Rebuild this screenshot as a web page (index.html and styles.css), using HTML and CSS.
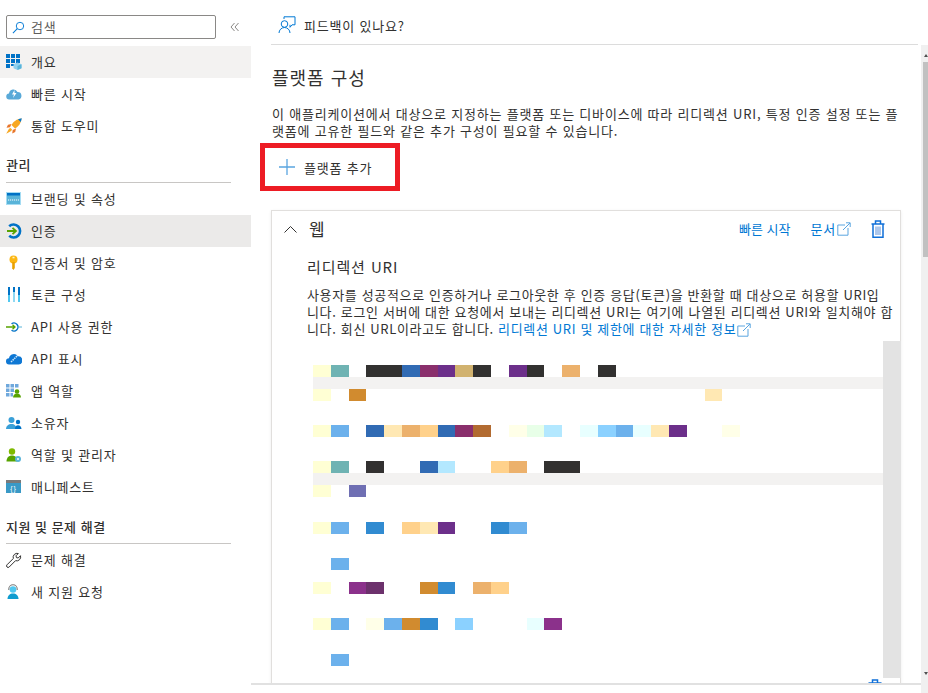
FILE: index.html
```html
<!DOCTYPE html>
<html lang="ko">
<head>
<meta charset="utf-8">
<title>플랫폼 구성</title>
<link rel="stylesheet" href="styles.css">
</head>
<body>
<div class="app">
  <aside class="sidebar">
    <div class="search-row">
      <div class="search">
        <svg class="search-icon" viewBox="0 0 14 14"><circle cx="8.6" cy="5.4" r="4" fill="none" stroke="#0078d4"/><path d="M5.7 8.3 1 13" stroke="#0078d4" stroke-width="1.1"/></svg>
        <span>검색</span>
      </div>
      <svg class="collapse" viewBox="0 0 10 10"><path d="M4.500 1 1 5l3.500 4M8.500 1 5 5l3.500 4" fill="none" stroke="#8a8886"/></svg>
    </div>
    <a class="nav-item hover"><svg class="nav-icon" viewBox="0 0 16 16"><path fill="#0072c6" d="M0 0h4v4H0zM5 0h4v4H5zM10 0h4v4h-4zM0 5h4v4H0zM5 5h4v4H5zM10 5h4v4h-4zM0 10h4v4H0zM5 10h4v2H5z"/><path fill="#8fd0ef" d="m11.500 8.500 4 1.800v4L11.500 16l-4-1.700v-4z"/><path fill="#59b4d9" d="M11.500 12v4l4-1.700v-4z"/></svg><span>개요</span></a>
    <a class="nav-item"><svg class="nav-icon" viewBox="0 0 16 16"><path fill="#59a9d8" d="M3.500 13.500a3 3 0 0 1-.5-6 4.500 4.500 0 0 1 8.500-1.500 3.800 3.800 0 0 1 1 7.500z"/><path fill="#fff" d="M8.500 4 6 8.500h2L7 12l3.500-5H8.500z"/></svg><span>빠른 시작</span></a>
    <a class="nav-item"><svg class="nav-icon" viewBox="0 0 16 16"><path fill="#f7a823" d="M15.500.5c-5 .5-8 3-10 6.500l3.500 3.500c3.500-2 6-5 6.500-10z"/><path fill="#0078d4" d="M15.800.2 12 1.200l2.800 2.800z"/><path fill="#e8762c" d="M5.500 6 2 6.800.5 9.800l3.500-.5zM10 10.500 9.200 14l-3 1.500.5-3.500z"/><path fill="#f7a823" d="M4.500 10 3 10.800.2 15.800 5.200 13l.8-1.500z"/></svg><span>통합 도우미</span></a>

    <h2 class="nav-heading">관리</h2>
    <a class="nav-item"><svg class="nav-icon" viewBox="0 0 16 16"><rect y="1" width="15" height="13" fill="#a5dcf3"/><rect x="1" y="2" width="13" height="11" fill="#59b4d9"/><rect x="1" y="2" width="13" height="2.500" fill="#0072c6"/><path stroke="#fff" stroke-dasharray="1.200 .8" d="M2 9h11"/></svg><span>브랜딩 및 속성</span></a>
    <a class="nav-item active"><svg class="nav-icon" viewBox="0 0 16 16"><path d="M3.200 3.200A6.500 6.500 0 1 1 3.200 12.800" fill="none" stroke="#0072c6" stroke-width="2.600"/><path d="M1 8h8.500M6.500 4.800 10 8l-3.500 3.200" fill="none" stroke="#57a300" stroke-width="1.800"/></svg><span>인증</span></a>
    <a class="nav-item"><svg class="nav-icon" viewBox="0 0 16 16"><circle cx="7.500" cy="4.500" r="4" fill="#fcb714"/><path fill="#e9a100" d="M6.200 7h2.600v6l-1.300 2-1.300-1.500z"/><rect x="6.500" y="1.800" width="2" height="1.500" fill="#fff3c4"/></svg><span>인증서 및 암호</span></a>
    <a class="nav-item"><svg class="nav-icon" viewBox="0 0 16 16"><path fill="#0072c6" d="M2 0h2v8H2zM7 0h2v5H7zM12 0h2v8h-2z"/><path fill="#50c8f0" d="M2 8h2v7H2zM12 8h2v7h-2z"/><path fill="#8fd8f2" d="M7 5h2v10H7z"/></svg><span>토큰 구성</span></a>
    <a class="nav-item"><svg class="nav-icon" viewBox="0 0 16 16"><path d="M5.500 4.800A4 4 0 1 1 5.500 11.200" fill="none" stroke="#0072c6" stroke-width="1.300"/><path d="M0 8h9M6.500 5.800 9 8l-2.500 2.200" fill="none" stroke="#57a300" stroke-width="1.300"/><path d="M12 8h4" stroke="#59b4d9"/></svg><span>API 사용 권한</span></a>
    <a class="nav-item"><svg class="nav-icon" viewBox="0 0 16 16"><path fill="#0f78d4" d="M3.200 13.500a3 3 0 0 1-.2-6.200 4.800 4.800 0 0 1 8.800-2 4.100 4.100 0 0 1 .8 8.200z"/><path stroke="#cfe8fa" stroke-width="1.500" stroke-dasharray="1.500 .8" d="m5 11 6-6"/></svg><span>API 표시</span></a>
    <a class="nav-item"><svg class="nav-icon" viewBox="0 0 16 16"><path fill="#6fa8dc" d="M0 1h3.500v3.500H0zM4.500 1H8v3.500H4.500zM9 1h3.500v3.500H9zM0 5.500h3.500V9H0zM4.500 5.500H8V9H4.500zM0 10h3.500v3.500H0zM4.500 10H7v3.500H4.500z"/><circle cx="11" cy="8.500" r="2.300" fill="#57a300"/><path fill="#57a300" d="M7 14.500c0-2.500 2-4 4-4s4 1.500 4 4z"/></svg><span>앱 역할</span></a>
    <a class="nav-item"><svg class="nav-icon" viewBox="0 0 16 16"><circle cx="5.500" cy="5" r="3" fill="#3aa0d8"/><path fill="#3aa0d8" d="M0 14c0-3 2.500-5 5.500-5s5 2 5 5z"/><circle cx="12" cy="7" r="2.200" fill="#0072c6"/><path fill="#0072c6" d="M9 14c0-2.500 1.200-3.800 3-3.800s3.500 1.300 3.500 3.800z"/></svg><span>소유자</span></a>
    <a class="nav-item"><svg class="nav-icon" viewBox="0 0 16 16"><circle cx="6" cy="4.500" r="3.200" fill="#7fba00"/><path fill="#57a300" d="M.5 14.500c0-4 2.500-6 5.500-6s5.500 2 5.500 6z"/><circle cx="12" cy="12" r="3" fill="#59b4d9"/><circle cx="12" cy="12" r="1" fill="#fff"/></svg><span>역할 및 관리자</span></a>
    <a class="nav-item"><svg class="nav-icon" viewBox="0 0 16 16"><rect y="1" width="15" height="3" fill="#7a7a7a"/><rect y="4" width="15" height="10" fill="#3999c6"/><text class="glyph" x="7.500" y="11.500" text-anchor="middle">{}</text></svg><span>매니페스트</span></a>

    <h2 class="nav-heading second">지원 및 문제 해결</h2>
    <a class="nav-item"><svg class="nav-icon" viewBox="0 0 16 16"><path fill="none" stroke="#323130" d="M1 12.800 7.300 6.500a4 4 0 0 1 5-5l-2.300 2.300.4 1.800 1.800.4L14.500 3.700a4 4 0 0 1-5 5L3.200 15a1.500 1.500 0 0 1-2.200-2.200z"/></svg><span>문제 해결</span></a>
    <a class="nav-item"><svg class="nav-icon" viewBox="0 0 16 16"><circle cx="7" cy="5.500" r="3.300" fill="#50c8f0"/><path fill="#0f9ccf" d="M1.500 15c0-3.500 2.500-5.500 5.500-5.500s5.500 2 5.500 5.500z"/><path fill="none" stroke="#7a7a7a" stroke-width="1.100" d="M2.800 6V5a4.200 4.200 0 0 1 8.400 0v1"/></svg><span>새 지원 요청</span></a>
  </aside>

  <main class="main">
    <div class="topbar">
      <svg class="feedback-icon" viewBox="0 0 18 18"><circle cx="6.500" cy="8" r="3.300" fill="none" stroke="#0078d4"/><path d="M1 17c0-3 2.500-5.500 5.500-5.500S12 14 12 17" fill="none" stroke="#0078d4"/><path d="M6 3V.8h11v8h-3l-2 2.500V8.800" fill="none" stroke="#0078d4"/></svg>
      <span>피드백이 있나요?</span>
    </div>
    <div class="body-row">
      <div class="scroller">
        <h1 class="page-title">플랫폼 구성</h1>
        <p class="intro">이 애플리케이션에서 대상으로 지정하는 플랫폼 또는 디바이스에 따라 리디렉션 URI, 특정 인증 설정 또는 플랫폼에 고유한 필드와 같은 추가 구성이 필요할 수 있습니다.</p>
        <a class="add-platform">
          <svg class="plus" viewBox="0 0 16 16"><path d="M8 0v16M0 8h16" stroke="#5aa5e0" stroke-width="1.300"/></svg>
          <span>플랫폼 추가</span>
        </a>
        <section class="card">
          <header class="card-head">
            <svg class="chevron" viewBox="0 0 13 8"><path d="M.5 7.500 6.500 1.500l6 6" fill="none" stroke="#323130"/></svg>
            <h2 class="card-title">웹</h2>
            <a class="link quick">빠른 시작</a>
            <a class="link docs">문서<svg class="ext" viewBox="0 0 14 14"><path d="M8 3H.8v10.200H11V6M6 8l7-7M9 .8h4.200V5" fill="none" stroke="#5aa5e0"/></svg></a>
            <svg class="trash" viewBox="0 0 14 18"><path d="M.5 4h13M4.500 4V1h5v3M2 4v13.200h10V4" fill="none" stroke="#0f6fd8" stroke-width="1.500"/><path d="M5 6.500V15M7 6.500V15M9 6.500V15" stroke="#5a8fd8"/></svg>
          </header>
          <h3 class="section-title">리디렉션 URI</h3>
          <p class="section-text">사용자를 성공적으로 인증하거나 로그아웃한 후 인증 응답(토큰)을 반환할 때 대상으로 허용할 URI입<br>니다. 로그인 서버에 대한 요청에서 보내는 리디렉션 URI는 여기에 나열된 리디렉션 URI와 일치해야 합<br>니다. 회신 URL이라고도 합니다. <a class="link">리디렉션 URI 및 제한에 대한 자세한 정보<svg class="ext" viewBox="0 0 14 14"><path d="M8 3H.8v10.200H11V6M6 8l7-7M9 .8h4.200V5" fill="none" stroke="#5aa5e0"/></svg></a></p>
          <div class="uri-list">
            <div class="uri-rows">
              <div class="px"><i class="y"></i><i class="te"></i><i></i><i class="d"></i><i class="d"></i><i class="b"></i><i class="m"></i><i class="p"></i><i class="ta"></i><i class="d"></i><i></i><i class="p"></i><i class="d"></i><i></i><i class="o"></i><i></i><i class="d"></i></div>
              <div class="px band"></div>
              <div class="px"><i class="y"></i><i></i><i class="oc"></i><i></i><i></i><i></i><i></i><i></i><i></i><i></i><i></i><i></i><i></i><i></i><i></i><i></i><i></i><i></i><i></i><i></i><i></i><i></i><i class="cr"></i></div>
              <div class="px gap-2"><i class="y"></i><i class="lb"></i><i></i><i class="b"></i><i class="cr"></i><i class="o"></i><i class="lo"></i><i class="b"></i><i class="m"></i><i class="br"></i><i></i><i class="py"></i><i class="pg"></i><i class="pb"></i><i></i><i class="pc"></i><i class="sk"></i><i class="lb"></i><i class="pc"></i><i class="cr"></i><i class="p"></i><i></i><i></i><i class="py"></i></div>
              <div class="px gap-2"><i class="y"></i><i class="te"></i><i></i><i class="d"></i><i></i><i></i><i class="b"></i><i class="pb"></i><i></i><i></i><i class="lo"></i><i class="o"></i><i></i><i class="d"></i><i class="d"></i></div>
              <div class="px band"></div>
              <div class="px"><i class="y"></i><i></i><i class="in"></i></div>
              <div class="px gap-25"><i class="y"></i><i class="lb"></i><i></i><i class="b2"></i><i></i><i class="lo"></i><i class="cr"></i><i class="p"></i><i></i><i></i><i class="b2"></i><i class="lb"></i></div>
              <div class="px gap-2"><i></i><i class="lb"></i></div>
              <div class="px gap-1"><i class="y"></i><i></i><i class="m2"></i><i class="dm"></i><i></i><i></i><i class="oc"></i><i class="b2"></i><i></i><i class="o"></i><i class="lo"></i></div>
              <div class="px gap-2"><i class="y"></i><i class="lb"></i><i></i><i class="py"></i><i class="lb"></i><i class="oc"></i><i class="b2"></i><i></i><i class="sk"></i><i></i><i></i><i></i><i class="pc"></i><i class="m2"></i></div>
              <div class="px gap-2"><i></i><i class="lb"></i></div>
            </div>
            <div class="uri-scroll"></div>
          </div>
          <div class="clip-row">
            <span>로그아웃 URL은 서버에서 사용자의 세션 데이터를 지우는 데 사용됩니다</span>
            <svg class="trash small" viewBox="0 0 14 18"><path d="M.5 4h13M4.500 4V1h5v3M2 4v13.200h10V4" fill="none" stroke="#0f6fd8" stroke-width="1.500"/></svg>
          </div>
        </section>
      </div>
      <div class="page-scroll">
        <div class="arrow up"></div>
        <div class="thumb"></div>
        <div class="arrow down"></div>
      </div>
    </div>
  </main>
</div>
</body>
</html>
```
FILE: styles.css
```css
*, *::before, *::after { box-sizing: border-box; }
html, body { margin: 0; height: 100%; overflow: hidden; }
body {
  background: #fff;
  color: #323130;
  font-family: "Noto Sans CJK KR", "Noto Sans", sans-serif;
  font-size: 13px;
  letter-spacing: .8px;
}
a { color: inherit; text-decoration: none; }
h1, h2, h3, p { margin: 0; font-weight: 400; }

.app { display: flex; height: 693px; }

.sidebar { width: 251px; flex: none; }
.search-row { display: flex; padding: 15px 0 0 6px; height: 46px; align-items: flex-start; }
.search {
  width: 210px; height: 24px;
  border: 1px solid #8a8886; border-radius: 2px;
  display: flex; align-items: center;
  padding-left: 5px; gap: 6px;
  color: #605e5c; line-height: 20px;
}
.search-icon { width: 13px; height: 13px; }
.collapse { width: 10px; height: 10px; margin: 7px 0 0 14px; }

.nav-item { display: flex; align-items: center; height: 32px; padding-left: 6px; white-space: nowrap; }
.nav-item span { margin: -1px 0 0 9px; }
.nav-icon { width: 16px; height: 16px; flex: none; }
.hover { background: #f3f2f1; }
.active { background: #ebeae9; }
.glyph { fill: #fff; font-size: 7px; font-family: "Liberation Sans", sans-serif; }

.nav-heading {
  margin: 12px 20px 0 6px; height: 29px;
  border-bottom: 1px solid #c8c6c4;
  font-size: 13px; font-weight: 500; line-height: 22px; letter-spacing: .5px;
}
.nav-heading.second { margin-top: 13px; height: 28px; }

.main { flex: 1; min-width: 0; display: flex; flex-direction: column; }
.topbar {
  height: 45px; flex: none;
  margin: 0 10px 0 20px; padding: 6px 0 0 7px;
  border-bottom: 1px solid #dcdcdc;
  display: flex; align-items: center; gap: 8px;
}
.feedback-icon { width: 18px; height: 18px; margin-top: -1px; }
.body-row { display: flex; height: 648px; }
.scroller {
  width: 670px; height: 640px; overflow: hidden; flex: none;
  border-bottom: 2px solid #e1e1e1;
  padding: 0 20px 0 21px;
}
.page-title { font-size: 18px; line-height: 24px; margin-top: 20px; letter-spacing: 1px; }
.intro { margin-top: 16px; line-height: 17px; word-break: break-all; }

.add-platform {
  position: relative;
  display: flex; align-items: center; gap: 9px;
  height: 32px; margin-top: 12px; padding-left: 7px;
}
.add-platform::after {
  content: ""; position: absolute;
  left: -12px; top: -8px;
  width: 140px; height: 48px;
  border: 5px solid #ed1c24;
}
.plus { width: 16px; height: 16px; }

.card {
  margin: 27px 0 0 -1px; width: 630px; height: 600px;
  border: 1px solid #e1dfdd;
  box-shadow: 0 1px 3px rgba(0,0,0,.08);
  padding-left: 35px;
}
.card-head { display: flex; align-items: center; height: 35px; margin-left: -35px; padding: 0 14px 0 12px; }
.chevron { width: 13px; height: 8px; }
.card-title { font-size: 17px; margin-left: 12px; flex: 1; }
.link { color: #0078d4; }
.quick { margin-right: 20px; letter-spacing: 0; }
.docs { margin-right: 19px; display: inline-flex; align-items: center; }
.ext { width: 14px; height: 14px; vertical-align: -3px; margin-left: 1px; }
.trash { width: 16px; height: 18px; }
.section-title { font-size: 15px; line-height: 20px; margin-top: 11px; letter-spacing: .9px; }
.section-text { margin-top: 9px; line-height: 17px; white-space: nowrap; letter-spacing: .65px; }

.uri-list { display: flex; height: 337px; margin-top: 4px; }
.uri-rows { flex: 1; padding: 24px 0 0 6px; }
.uri-scroll { width: 18px; background: #e3e3e3; flex: none; }
.px { display: grid; grid-template-columns: repeat(32, 17.8px); grid-auto-rows: 12px; height: 12px; }
.band { background: #f3f2f1; }
.gap-1 { margin-top: 12px; }
.gap-2 { margin-top: 24px; }
.gap-25 { margin-top: 25px; }
.y { background: #ffffd4; } .te { background: #6fb3b3; } .d { background: #323130; }
.b { background: #316bb4; } .m { background: #8a2f6c; } .p { background: #6c2f8a; }
.ta { background: #d1b26f; } .o { background: #ecb16c; } .oc { background: #d18b2f; }
.cr { background: #ffe8b3; } .lb { background: #6cb1ec; } .lo { background: #ffd18b; }
.br { background: #b26b31; } .py { background: #ffffe8; } .pg { background: #e8ffe8; }
.pb { background: #b3e8ff; } .pc { background: #e8ffff; } .sk { background: #8bd1ff; }
.in { background: #6f6fb3; } .b2 { background: #318bd1; } .m2 { background: #8b318b; }
.dm { background: #6c316c; }

.clip-row { display: flex; align-items: flex-start; height: 20px; margin-top: 3px; padding-left: 14px; padding-right: 18px; }
.clip-row span { flex: 1; font-size: 10.500px; line-height: 14px; letter-spacing: 0; }
.trash.small { height: 18px; width: 14px; margin-top: -2px; }

.page-scroll { width: 7px; flex: none; height: 648px; background: #f0f0f0; position: relative; }
.thumb { margin: 17px 0 0 2px; height: 195px; width: 5px; background: #c1c1c1; }
.arrow { position: absolute; right: 0; width: 0; height: 0; border-left: 2.500px solid transparent; border-right: 2.500px solid transparent; }
.arrow.up { top: 9px; border-bottom: 3px solid #505050; }
.arrow.down { top: 627px; border-top: 3px solid #505050; }
```
